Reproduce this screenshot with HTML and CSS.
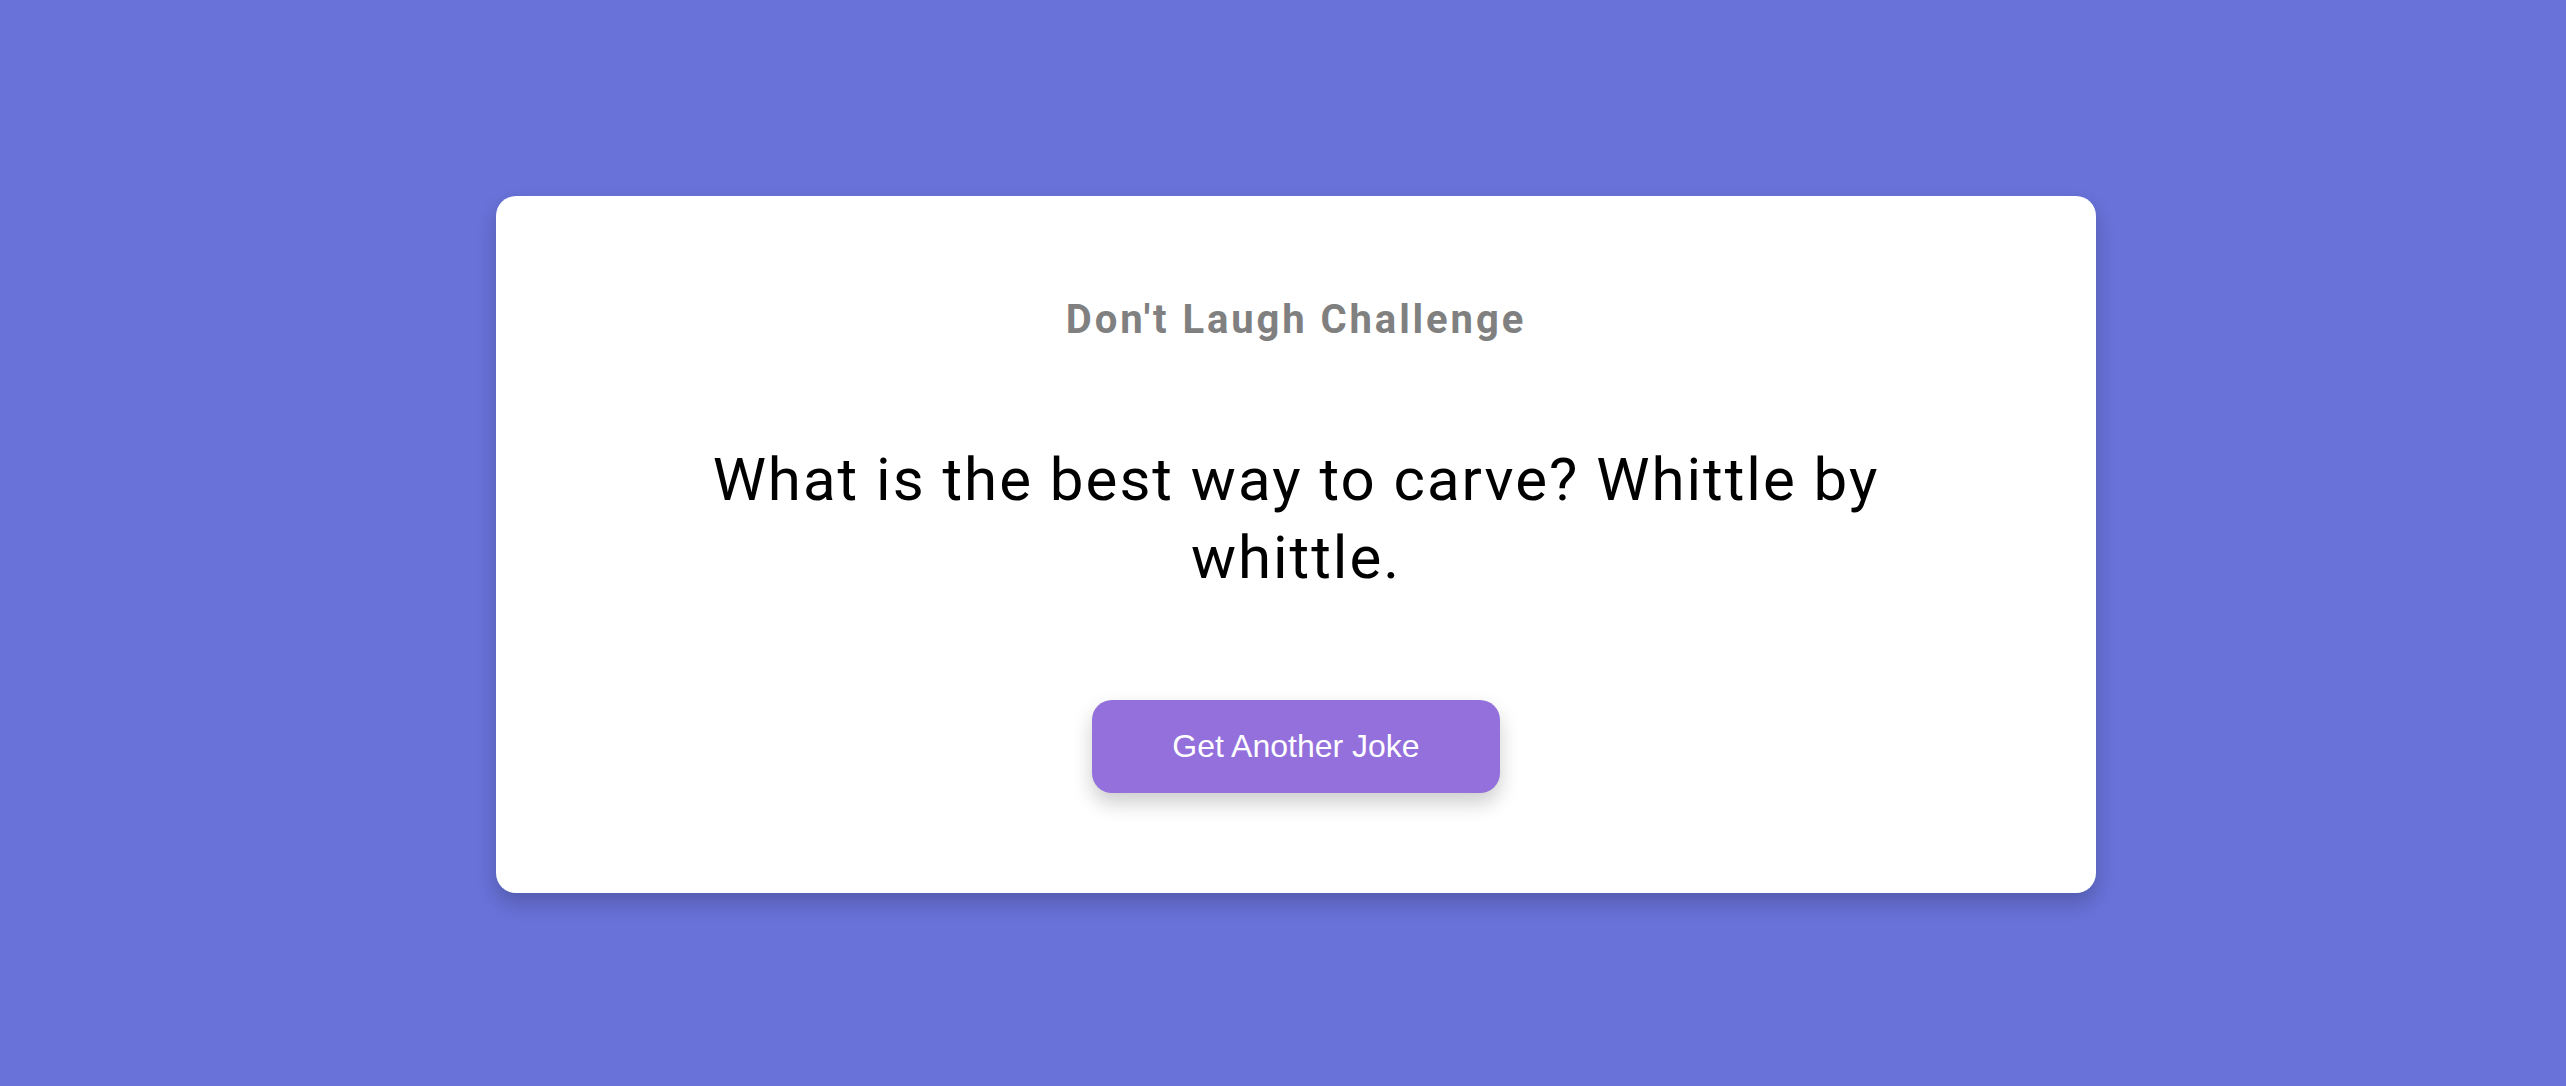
FILE: index.html
```html
<!DOCTYPE html>
<html lang="en">
<head>
<meta charset="utf-8">
<title>Don't Laugh Challenge</title>
<link rel="stylesheet" href="styles.css">
</head>
<body>
<main class="page">
  <section class="card">
    <h3 class="title">Don't Laugh Challenge</h3>
    <div class="joke">What is the best way to carve? Whittle by whittle.</div>
    <button class="btn">Get Another Joke</button>
  </section>
</main>
</body>
</html>
```

FILE: styles.css
```css
* { box-sizing: border-box; }
html, body {
  margin: 0;
  padding: 0;
  height: 100%;
}
body {
  background: #6872d8;
  font-family: Roboto, "Liberation Sans", sans-serif;
  overflow: hidden;
}
.page {
  height: 100vh;
  display: flex;
  align-items: center;
  justify-content: center;
  padding-left: 26px;
  padding-top: 3px;
}
.card {
  width: 1600px;
  background: #ffffff;
  border-radius: 20px;
  box-shadow: 0 10px 20px rgba(0, 0, 0, 0.2);
  padding: 100px 200px;
  display: flex;
  flex-direction: column;
  align-items: center;
  text-align: center;
}
.title {
  margin: 0;
  font-size: 40px;
  font-weight: 700;
  color: #808080;
  letter-spacing: 2.9px;
  line-height: normal;
}
.joke {
  margin: 98px 0 103px;
  font-size: 60px;
  line-height: 78px;
  letter-spacing: 2px;
  color: #000;
  max-width: 1200px;
}
.btn {
  font-family: "Liberation Sans", Arial, sans-serif;
  font-size: 32px;
  color: #ffffff;
  background: #9370db;
  border: none;
  border-radius: 20px;
  padding: 28px 80px;
  box-shadow: 0 10px 20px rgba(0, 0, 0, 0.2);
  cursor: pointer;
}
```
